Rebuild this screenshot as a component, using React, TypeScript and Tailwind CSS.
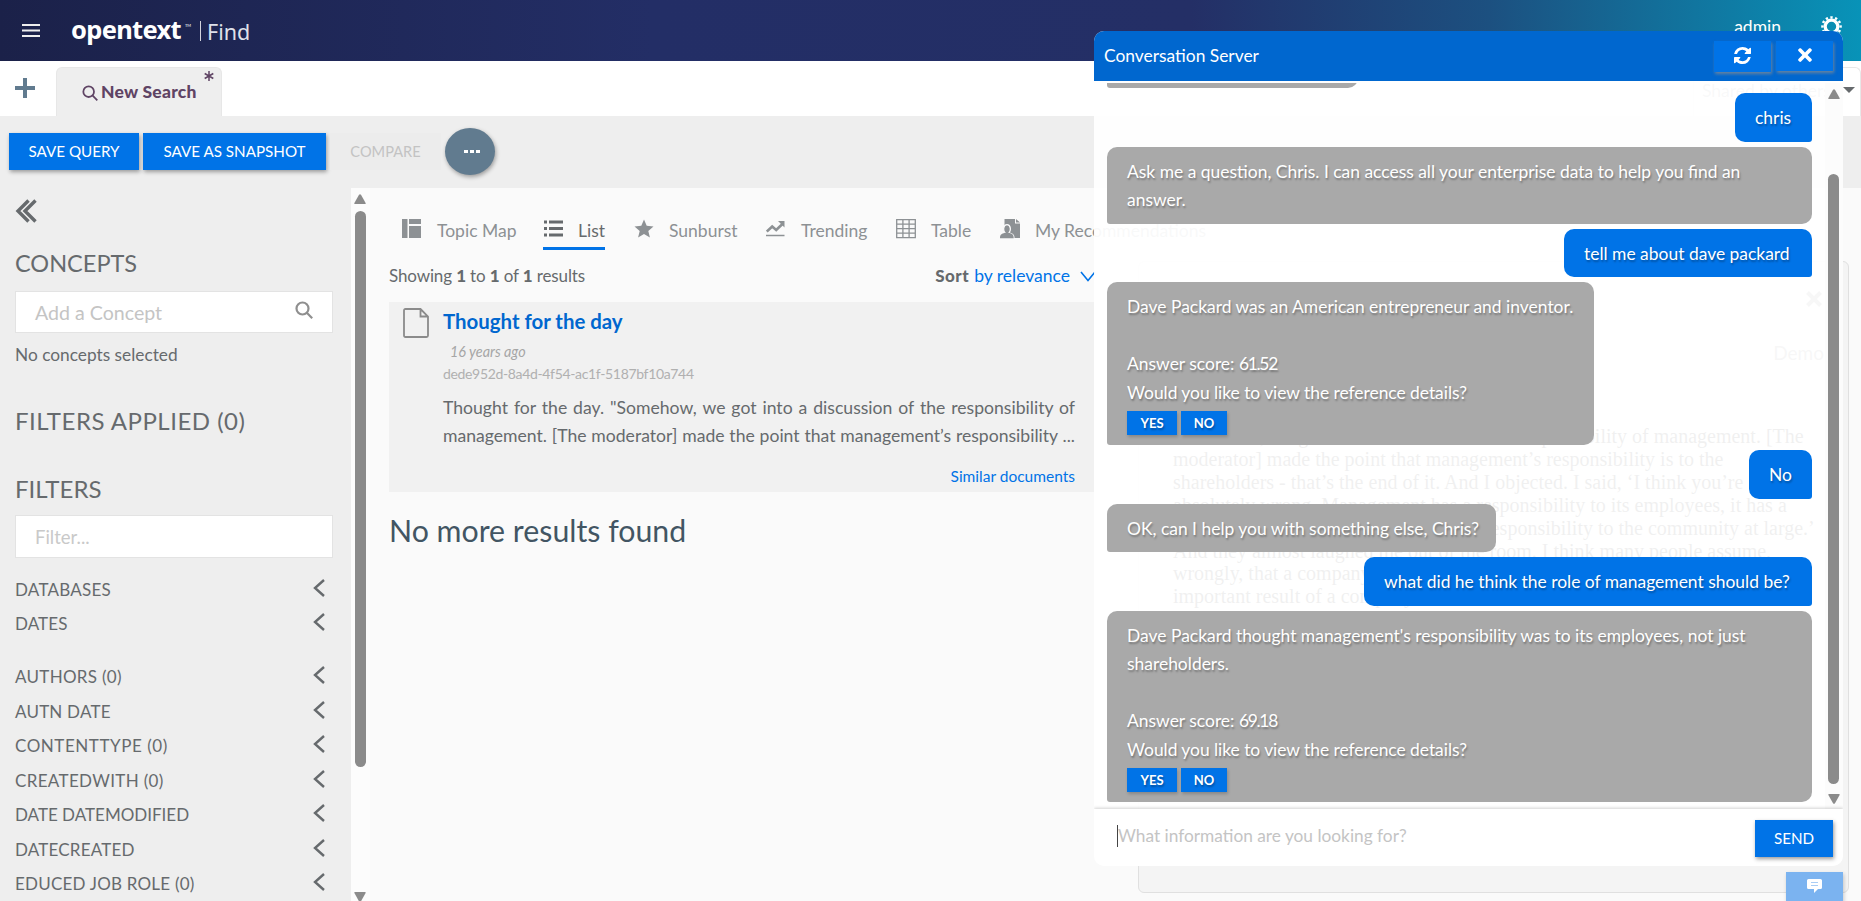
import type { ReactNode } from 'react';
import { FaTimes } from 'react-icons/fa';

function Magnifier({ className, width = 2 }: { className: string; width?: number }) {
  return (
    <svg viewBox="0 0 18 18" className={className} fill="none" stroke="currentColor" strokeWidth={width}>
      <circle cx="7.5" cy="7.5" r="6" />
      <path d="M11.8 11.8 17.2 17.2" />
    </svg>
  );
}

function Chevron() {
  return (
    <svg viewBox="0 0 12 18" className="mb-1 h-[18px] w-3" fill="none" stroke="#666a6d" strokeWidth="2.4">
      <path d="M11 1 2 9l9 8" />
    </svg>
  );
}

function Gear() {
  return (
    <svg viewBox="0 0 22 22" className="mb-[8px] ml-10 h-[21px] w-[21px]" fill="none" stroke="#ffffff">
      <circle cx="11" cy="11" r="6.6" strokeWidth="3.4" />
      <circle cx="11" cy="11" r="9.500" strokeWidth="2.600" pathLength="120" strokeDasharray="5 5" strokeDashoffset="2.500" />
    </svg>
  );
}

function Arrow({ down = false }: { down?: boolean }) {
  return (
    <svg viewBox="0 0 12 10" className="h-[10px] w-3 shrink-0" fill="#8b8b8b">
      {down ? (
        <path d="M1 0h10q1 0 .6 1L7 9.3q-1 1-2 0L.4 1Q0 0 1 0Z" />
      ) : (
        <path d="M1 10h10q1 0 .6-1L7 .7q-1-1-2 0L.4 9q-.4 1 .6 1Z" />
      )}
    </svg>
  );
}

const facets = [
  ['DATABASES', 'h-[34px]', 'tracking-[0.24px]'],
  ['DATES', 'h-[34px] mb-[19px]', 'tracking-[0.1px]'],
  ['AUTHORS (0)', 'h-[34px]', 'tracking-[0.3px]'],
  ['AUTN DATE', 'h-[35px]', 'tracking-[0.2px]'],
  ['CONTENTTYPE (0)', 'h-[34px]', 'tracking-[0.55px]'],
  ['CREATEDWITH (0)', 'h-[35px]', 'tracking-[0.35px]'],
  ['DATE DATEMODIFIED', 'h-[34px]', 'tracking-[0px]'],
  ['DATECREATED', 'h-[35px]', 'tracking-[0.2px]'],
  ['EDUCED JOB ROLE (0)', 'h-[34px]', 'tracking-[0.22px]'],
];

function Sidebar() {
  return (
    <aside className="flex h-full w-[351px] shrink-0 flex-col bg-[#eeeeee] pl-[15px] pr-[18px] pt-[11px] text-[#666a6d]">
      <svg viewBox="0 0 22 24" className="h-6 w-[22px] shrink-0" fill="none" stroke="#666a6d" strokeWidth="3.4">
        <path d="M13.5 1.5 3 12l10.5 10.5M20.5 1.5 10 12l10.500 10.500" />
      </svg>
      <h2 className="mt-[25px] h-[30px] text-[23.5px] leading-[30px]">CONCEPTS</h2>
      <div className="mt-[13px] flex h-[42px] shrink-0 items-center justify-between border border-[#e3e3e3] bg-white pl-[19px] pr-[19px]">
        <span className="mt-px text-[19.6px] text-[#c4c4c4]">Add a Concept</span>
        <Magnifier className="-mt-1 h-[18px] w-[18px] text-[#8f8f8f]" width={2.2} />
      </div>
      <p className="mt-[9px] h-[25px] text-[17.3px] leading-[25px]">No concepts selected</p>
      <h2 className="mt-[39px] h-[30px] text-[24px] leading-[30px] tracking-[0.5px]">FILTERS APPLIED (0)</h2>
      <h2 className="mt-[38px] h-[30px] text-[24px] leading-[30px]">FILTERS</h2>
      <div className="mt-[11px] flex h-[43px] shrink-0 items-center border border-[#e3e3e3] bg-white pl-[19px]">
        <span className="mt-[3px] text-[18.5px] text-[#c9c9c9]">Filter...</span>
      </div>
      <ul className="mt-[15px]">
        {facets.map(([label, height, tracking]) => (
          <li key={label} className={`flex items-center justify-between pr-2 text-[17px] ${height} ${tracking}`}>
            {label}
            <Chevron />
          </li>
        ))}
      </ul>
    </aside>
  );
}

function View({ icon, label, box, active = false }: { icon: ReactNode; label: string; box: string; active?: boolean }) {
  return (
    <div className={`${box} shrink-0`}>
      <div className={`flex h-[38px] w-fit items-center gap-[15px] border-b-[3px] ${active ? 'border-[#0073e7] text-[#666a6d]' : 'border-transparent text-[#8d9194]'}`}>
        <span className="-mt-0.5 w-5">{icon}</span>
        <span className="mt-[4px] whitespace-nowrap text-[17.5px]">{label}</span>
      </div>
    </div>
  );
}

const icon = 'h-5 w-5';

function Views() {
  return (
    <nav className="flex h-[49px] pt-3">
      <View
        box="w-[141px]"
        label="Topic Map"
        icon={<svg viewBox="0 0 20 20" className={icon} fill="currentColor"><path d="M0 0h5.500v19H0zM7 0h12v5H7zM7 7h12v12H7z" /></svg>}
      />
      <View
        box="w-[91px]"
        label="List"
        active
        icon={<svg viewBox="0 0 20 20" className={icon} fill="currentColor"><path d="M1 1.500h3v3H1zM6 1.500h14v3H6zM1 8h3v3H1zM6 8h14v3H6zM1 14.500h3v3H1zM6 14.500h14v3H6z" /></svg>}
      />
      <View
        box="w-[132px]"
        label="Sunburst"
        icon={<svg viewBox="0 0 20 20" className={icon} fill="currentColor"><path d="m10 .5 2.700 6.300 6.800.6-5.200 4.500 1.600 6.600L10 15l-5.900 3.500 1.600-6.600L.5 7.400l6.800-.6z" /></svg>}
      />
      <View
        box="w-[130px]"
        label="Trending"
        icon={
          <svg viewBox="0 0 20 20" className={icon} fill="none" stroke="currentColor">
            <path d="m.8 12.500 5.400-5 4 3.500L17 4.500" strokeWidth="2.600" />
            <path d="M12 2h6.500v6.500z" fill="currentColor" stroke="none" />
            <path d="M0 16.500h18.500" strokeWidth="1.500" />
          </svg>
        }
      />
      <View
        box="w-[104px]"
        label="Table"
        icon={
          <svg viewBox="0 0 20 20" className={icon} fill="none" stroke="currentColor" strokeWidth="1.300">
            <path d="M.7.700h18.600v18H.7zM.7 5.200h18.600M.7 9.700h18.600M.7 14.200h18.600M6.900.7v18M13.100.7v18" />
          </svg>
        }
      />
      <View
        box="w-[220px]"
        label="My Recommendations"
        icon={
          <svg viewBox="0 0 20 20" className={icon}>
            <path d="M4.500 0H15v4.500h5V19H4.500z" fill="currentColor" />
            <path d="M16 0l4 3.500h-4z" fill="currentColor" />
            <path d="M0 19.500c0-4 1.500-4.500 5-5.800-2-2-2-8 2-8s4 6 2 8c3.500 1.300 5 1.800 5 5.800z" fill="currentColor" stroke="#fafafa" strokeWidth="1.300" />
            <path d="M0 19.200c0-4 1.500-4.200 5-5.500h4c3.500 1.300 4.500 1.500 4.700 5.500z" fill="currentColor" />
          </svg>
        }
      />
    </nav>
  );
}

function Results() {
  return (
    <section className="w-[714px] shrink-0">
      <div className="flex h-[30px] items-center text-[#666a6d]">
        <p className="text-[17px] tracking-[-0.13px]">
          Showing <b className="font-black">1</b> to <b className="font-black">1</b> of <b className="font-black">1</b> results
        </p>
        <div className="ml-auto flex items-center whitespace-nowrap pr-[7px]">
          <b className="text-[17px] font-black tracking-[0.5px]">Sort</b>
          <span className="ml-[5px] text-[17.5px] text-[#0073e7]">by relevance</span>
          <svg viewBox="0 0 16 11" className="ml-[10px] h-[11px] w-4" fill="none" stroke="#0073e7" strokeWidth="1.600">
            <path d="m1 1 7 8.500L15 1" />
          </svg>
        </div>
      </div>
      <article className="mt-[11px] flex h-[190px] bg-[#f1f1f1] pl-[14px] pr-[27px]">
        <svg viewBox="0 0 26 30" className="mt-[6px] h-[30px] w-[26px] shrink-0" fill="none" stroke="#8b8b8b" strokeWidth="1.800">
          <path d="M2.500 1h15l7.500 7.500V27.500q0 1.500-1.500 1.500h-21Q1 29 1 27.500V2.500Q1 1 2.500 1ZM17.500 1v7.500H25" />
        </svg>
        <div className="ml-[14px] w-[632px] shrink-0">
          <h3 className="mt-[5px] h-7 text-[20.4px] font-bold leading-7 text-[#0067cf]">Thought for the day</h3>
          <p className="mt-[7px] h-5 pl-[7px] text-[14.4px] italic leading-5 text-[#a6a6a6]">16 years ago</p>
          <p className="mt-[2px] h-5 text-[14px] leading-5 tracking-[-0.34px] text-[#b0b0b0]">dede952d-8a4d-4f54-ac1f-5187bf10a744</p>
          <div className="mt-[10px] whitespace-nowrap text-[17.6px] leading-7 text-[#666a6d]">
            <p className="[text-align-last:justify]">Thought for the day. "Somehow, we got into a discussion of the responsibility of</p>
            <p className="[text-align-last:justify]">management. [The moderator] made the point that management’s responsibility ...</p>
          </div>
          <p className="mt-[14px] text-right text-[15.5px] leading-6 text-[#0073e7]">Similar documents</p>
        </div>
      </article>
      <h1 className="mt-[18px] text-[30.3px] leading-10 text-[#425563]">No more results found</h1>
    </section>
  );
}

const previewLines = [
  '"Somehow, we got into a discussion of the responsibility of management. [The',
  'moderator] made the point that management’s responsibility is to the',
  'shareholders - that’s the end of it. And I objected. I said, ‘I think you’re',
  'absolutely wrong. Management has a responsibility to its employees, it has a',
  'responsibility to its customers, it has a responsibility to the community at large.’',
  'And they almost laughed me out of the room. I think many people assume,',
  'wrongly, that a company exists simply to make money.',
  'important result of a company',
];

function Preview() {
  return (
    <section className="ml-[35px] flex h-[632px] w-[711px] shrink-0 flex-col rounded-md border border-[#e0e0e0] bg-[#f4f4f4] pl-[34px] pr-6">
      <svg viewBox="0 0 16 16" className="ml-auto mr-0.5 mt-[29px] h-4 w-4 shrink-0" stroke="#777777" strokeWidth="4">
        <path d="m1.500 1.500 13 13M14.500 1.500l-13 13" />
      </svg>
      <p className="mt-[34px] text-right text-[19px] leading-6 text-[#777777]">Demo</p>
      <div className="mt-[60px] whitespace-nowrap font-['Liberation_Serif',serif] text-[20px] leading-[22.900px] text-black">
        {previewLines.map((l) => (
          <p key={l}>{l}</p>
        ))}
      </div>
    </section>
  );
}

function Bot({ children, box = 'self-stretch' }: { children: ReactNode; box?: string }) {
  return (
    <div className={`rounded-[10px] rounded-bl-[3px] bg-[#a9a9a9] px-5 pb-[9px] pt-[11px] text-white [text-shadow:1px_2px_2px_rgba(0,0,0,0.3)] ${box}`}>
      {children}
    </div>
  );
}

function User({ children, box }: { children: ReactNode; box: string }) {
  return (
    <div className={`self-end whitespace-nowrap rounded-[10px] rounded-br-[3px] bg-[#0073e7] px-5 pb-[9px] pt-[11px] text-white [text-shadow:1px_2px_2px_rgba(0,0,0,0.3)] ${box}`}>
      {children}
    </div>
  );
}

function YesNo() {
  return (
    <div className="mt-1 mb-px flex h-6 gap-1 text-[13px] font-bold leading-6">
      <button className="w-[50px] bg-[#0073e7] shadow-[1px_2px_3px_rgba(0,0,0,0.2)] [text-shadow:inherit]">YES</button>
      <button className="w-[46px] bg-[#0073e7] shadow-[1px_2px_3px_rgba(0,0,0,0.2)] [text-shadow:inherit]">NO</button>
    </div>
  );
}

function Answer({ score }: { score: string }) {
  return (
    <>
      <br />
      <p>
        Answer score: <span className="tracking-[-1.3px]">{score}</span>
      </p>
      <p className="tracking-[-0.04px]">Would you like to view the reference details?</p>
      <YesNo />
    </>
  );
}

function Chat() {
  return (
    <div className="absolute left-[1094px] top-[31px] flex h-[835px] w-[749px] flex-col overflow-hidden rounded-[10px] bg-white/94">
      <header className="flex h-[50px] shrink-0 items-start bg-[#0067cf] pl-[10px] pr-[10px] text-white">
        <span className="mt-[13px] text-[17.4px] leading-6">Conversation Server</span>
        <button className="ml-auto mt-[10px] flex h-[31px] w-[57px] items-center justify-center bg-[#0073e7] shadow-[1px_2px_3px_rgba(140,140,140,0.75)]">
          <svg viewBox="0 0 1536 1536" className="-mt-0.5 h-[17px] w-[17px]" fill="currentColor">
            <path d="M1511 928q0 5-1 7-64 268-268 434.500T764 1536q-146 0-282.500-55T238 1324l-129 129q-19 19-45 19t-45-19-19-45V960q0-26 19-45t45-19h448q26 0 45 19t19 45-19 45l-137 137q71 66 161 102t187 36q134 0 250-65t186-179q11-17 53-117 8-23 30-23h192q13 0 22.500 9.500t9.500 22.500zm25-800v448q0 26-19 45t-45 19h-448q-26 0-45-19t-19-45 19-45l138-138Q969 256 768 256q-134 0-250 65T332 500q-11 17-53 117-8 23-30 23H50q-13 0-22.500-9.500T18 608v-7q65-268 270-434.500T768 0q146 0 284 55.500T1297 212l130-129q19-19 45-19t45 19 19 45z" />
          </svg>
        </button>
        <button className="ml-[5px] mt-[10px] flex h-[30px] w-[57px] items-center justify-center bg-[#0073e7] shadow-[1px_2px_3px_rgba(140,140,140,0.75)]">
          <FaTimes className="-mt-0.5 h-[20px] w-[20px]" />
        </button>
      </header>
      <div className="mt-0.5 flex h-[726px] shrink-0">
        <div className="flex w-[731px] flex-col gap-[5px] overflow-hidden pl-[13px] pr-[13px] text-[17.450px] leading-[28.5px]">
          <div className="h-[5px] w-[251px] shrink-0 overflow-hidden">
            <div className="-mt-[24px] h-[29px] rounded-[10px] rounded-bl-[3px] bg-[#a9a9a9]" />
          </div>
          <User box="w-[77px]">chris</User>
          <Bot>Ask me a question, Chris. I can access all your enterprise data to help you find an answer.</Bot>
          <User box="w-[248px]">tell me about dave packard</User>
          <Bot box="w-[487px] whitespace-nowrap">
            <p>Dave Packard was an American entrepreneur and inventor.</p>
            <Answer score="61.52" />
          </Bot>
          <User box="w-[63px]">No</User>
          <Bot box="w-[389px] whitespace-nowrap">OK, can I help you with something else, Chris?</Bot>
          <User box="w-[448px]">what did he think the role of management should be?</User>
          <Bot>
            <p>Dave Packard thought management's responsibility was to its employees, not just shareholders.</p>
            <Answer score="69.18" />
          </Bot>
        </div>
        <div className="flex w-[18px] flex-col items-center bg-[#fcfcfc] pb-[5px] pr-px pt-[6px]">
          <Arrow />
          <div className="mb-[10px] mt-[75px] w-[11px] flex-1 rounded-full bg-[#8b8b8b]" />
          <Arrow down />
        </div>
      </div>
      <footer className="flex flex-1 items-start bg-white/60 pl-[23px] pr-[10px] shadow-[0_-1px_3px_rgba(0,0,0,0.18)]">
        <span className="mt-4 h-[22px] w-px bg-[#444444]" />
        <span className="mt-[15px] text-[17.3px] leading-6 text-[#c4c4c4]">What information are you looking for?</span>
        <button className="ml-auto mt-[11px] h-[37px] w-[78px] bg-[#0073e7] text-[15.200px] text-white shadow-[1px_2px_4px_rgba(0,0,0,0.4)]">SEND</button>
      </footer>
    </div>
  );
}

export default function App() {
  return (
    <div className="relative flex h-[901px] w-[1861px] flex-col overflow-hidden bg-white font-[Lato,sans-serif]">
      <header className="flex h-[61px] shrink-0 items-center bg-[linear-gradient(90deg,#1b2149_0%,#232e66_35%,#242f66_64%,#1c5080_80%,#0893b8_100%)] pl-[22px] pr-[19px] text-white">
        <svg viewBox="0 0 18 14" className="h-[14px] w-[18px]" fill="#eeeeee">
          <path d="M0 0h18v2H0zM0 5.500h18v2H0zM0 11h18v2H0z" />
        </svg>
        <span className="ml-[31px] mt-[-3px] w-[114px] whitespace-nowrap font-['Noto_Sans',sans-serif] text-[25.500px] font-bold leading-8 tracking-[-0.700px]">opentext</span>
        <span className="mb-[9px] text-[4px] leading-none">TM</span>
        <span className="ml-[9px] h-5 w-px bg-white/80" />
        <span className="mt-[3px] ml-[6px] font-['Noto_Sans',sans-serif] text-[21.500px] leading-8 text-[#dfe1ea]">Find</span>
        <span className="mb-[7px] ml-auto text-[17.500px]">admin</span>
        <Gear />
      </header>

      <div className="flex h-[55px] shrink-0 items-end">
        <svg viewBox="0 0 20 20" className="mb-[18px] ml-[15px] h-5 w-5" fill="#617b8f">
          <path d="M8 0h4v8h8v4h-8v8H8v-8H0V8h8z" />
        </svg>
        <div className="ml-[21px] flex h-[49px] w-[166px] items-start rounded-t-md border border-b-0 border-[#e7e7e7] bg-[#eeeeee] pl-[25px] text-[#5f4464]">
          <Magnifier className="mt-[17px] h-4 w-4 shrink-0" />
          <span className="ml-[3px] mt-3 w-[97px] whitespace-nowrap text-[17.500px] font-black leading-6 tracking-[0.25px]">New Search</span>
          <svg viewBox="0 0 10 10" className="ml-[6px] mt-[3px] h-[10px] w-[10px] shrink-0" stroke="currentColor" strokeWidth="1.500">
            <path d="M5 0v10M.7 2.500l8.600 5M9.300 2.500l-8.600 5" />
          </svg>
        </div>
        <div className="ml-auto flex h-[49px] w-[168px] items-start rounded-t-md border border-b-0 border-[#e7e7e7] pl-[8px] pt-[11px] text-[#8d9194]">
          <span className="w-[130px] whitespace-nowrap text-[17.500px] leading-6">Shared by others</span>
          <svg viewBox="0 0 12 6" className="ml-[11px] mt-[8px] h-[6px] w-3" fill="#666a6d">
            <path d="M0 0h12L6 6z" />
          </svg>
        </div>
      </div>

      <div className="flex h-[72px] shrink-0 items-start bg-[#eeeeee] pl-[9px] text-[15.200px] text-white">
        <button className="mt-[17px] h-[37px] w-[130px] bg-[#0073e7] shadow-[1px_2px_4px_rgba(0,0,0,0.35)]">SAVE QUERY</button>
        <button className="ml-1 mt-[17px] h-[37px] w-[183px] bg-[#0073e7] shadow-[1px_2px_4px_rgba(0,0,0,0.35)]">SAVE AS SNAPSHOT</button>
        <button className="ml-1 mt-[17px] h-[37px] w-[111px] bg-[#ececec] text-[14.600px] text-[#c3c3c3]">COMPARE</button>
        <button className="ml-1 mt-3 flex h-[47px] w-[50px] items-center justify-center gap-[2px] rounded-[50%] bg-[#617b8f] pl-1 shadow-[1px_2px_4px_rgba(0,0,0,0.35)]">
          <i className="h-[3px] w-1 bg-white" />
          <i className="h-[3px] w-1 bg-white" />
          <i className="h-[3px] w-1 bg-white" />
        </button>
      </div>

      <div className="flex min-h-0 flex-1">
        <Sidebar />
        <div className="flex w-[19px] shrink-0 flex-col items-center bg-[#fcfcfc] pr-px pt-[6px]">
          <Arrow />
          <div className="mb-[125px] mt-[7px] h-[556px] w-[11px] shrink-0 rounded-full bg-[#8b8b8b]" />
          <Arrow down />
        </div>
        <main className="min-w-0 flex-1 bg-[#fafafa] pl-[19px] pt-[12px]">
          <div className="pl-[13px]">
            <Views />
          </div>
          <div className="mt-3 flex">
            <Results />
            <Preview />
          </div>
        </main>
      </div>

      <Chat />
      <button className="absolute left-[1786px] top-[872px] flex h-[30px] w-[57px] justify-center bg-[#7bb3f0] pt-[7px] shadow-[1px_2px_4px_rgba(0,0,0,0.2)]">
        <svg viewBox="0 0 15 14" className="h-[14px] w-[15px]">
          <path d="M1.500 0h12Q15 0 15 1.500v7Q15 10 13.500 10H11l-4 4v-4H1.500Q0 10 0 8.500v-7Q0 0 1.500 0Z" fill="#fff" />
          <path d="M4 3.500h7M4 6.500h7" stroke="#a9cdf5" />
        </svg>
      </button>
    </div>
  );
}
